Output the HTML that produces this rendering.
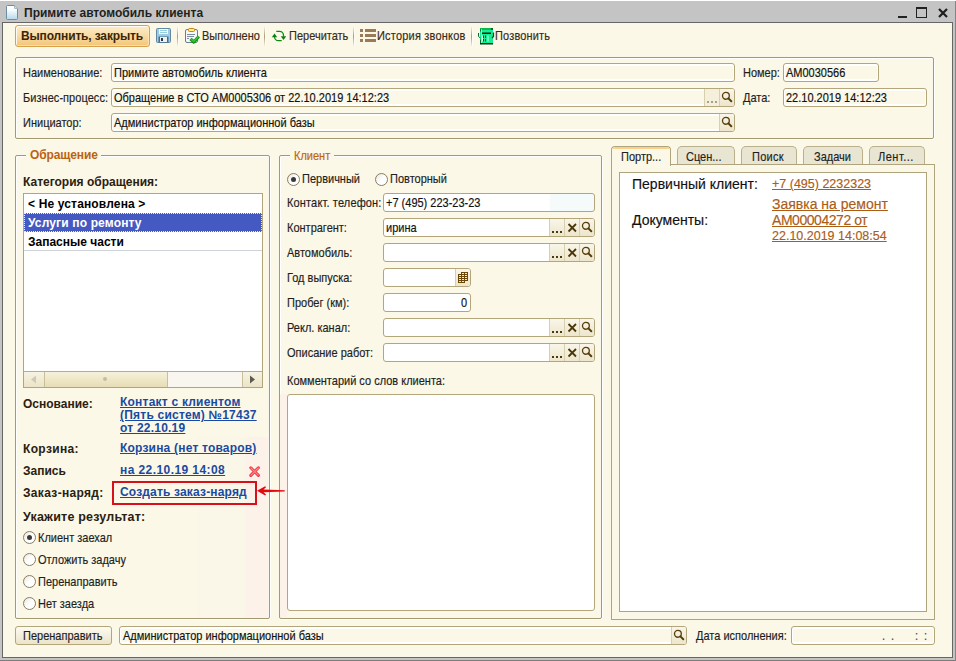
<!DOCTYPE html>
<html><head><meta charset="utf-8">
<style>
html,body{margin:0;padding:0}
body{width:956px;height:661px;position:relative;overflow:hidden;background:#fff;font-family:"Liberation Sans",sans-serif}
.a{position:absolute;box-sizing:border-box}
.t{position:absolute;white-space:nowrap;font-size:11px;line-height:13px;color:#1e1e1e;-webkit-text-stroke:0.15px currentColor}
.t.b,.t.lnk{-webkit-text-stroke:0}
.r{transform:scaleY(1.12);transform-origin:0 0}
.tb{color:#3a2a14}
.b{font-weight:bold}
.grp{position:absolute;box-sizing:border-box;border:1px solid #a49a70;border-radius:2px;box-shadow:inset 1px 1px 0 #fff,1px 1px 0 #fff}
.inp{position:absolute;box-sizing:border-box;background:#fff;border:1px solid #b3a67b;border-radius:3px;height:19px;overflow:hidden}
.ib{position:absolute;box-sizing:border-box;top:0;bottom:0;width:15px;background:linear-gradient(#f9f6e9,#ede6cc);border-left:1px solid #d8cfae}
.sep{position:absolute;width:1px;background:linear-gradient(rgba(168,156,120,0.1),#a89c78 50%,rgba(168,156,120,0.1));box-shadow:1px 0 0 rgba(255,255,255,0.6)}
.radio{position:absolute;box-sizing:border-box;width:13px;height:13px;border-radius:50%;border:1px solid #877d64;background:linear-gradient(135deg,#e9e5da,#fff 50%)}
.radio.on::after{content:"";position:absolute;left:3px;top:3px;width:5px;height:5px;border-radius:50%;background:#3a3a3a}
.lnk{color:#1a4aa0;text-decoration:underline;font-weight:bold;font-size:12px}
.olnk{color:#ab5c16;text-decoration:underline;font-size:14px}
.tab{position:absolute;box-sizing:border-box;top:146px;height:19px;border:1px solid #bab18c;border-bottom:none;border-radius:5px 5px 0 0;background:#e9e5d3}
</style></head><body>
<!-- window frame -->
<div class="a" style="left:0;top:1px;width:956px;height:660px;background:#c4c4c4"></div>
<div class="a" style="left:955px;top:1px;width:1px;height:660px;background:#858585"></div>
<div class="a" style="left:0;top:660px;width:956px;height:1px;background:#7c7c7c"></div>
<div class="a" style="left:2px;top:22px;width:951px;height:636px;border:1px solid #666;background:#fbf8e7"></div>
<!-- title icon -->
<svg class="a" style="left:6px;top:5px" width="13" height="15"><defs><linearGradient id="dg" x1="0" y1="0" x2="0" y2="1"><stop offset="0.25" stop-color="#fff"/><stop offset="1" stop-color="#b5d8ea"/></linearGradient></defs><path d="M0.5 1.5Q0.5 0.5 1.5 0.5H8.5L11.5 3.5V13.5Q11.5 14.5 10.5 14.5H1.5Q0.5 14.5 0.5 13.5z" fill="url(#dg)" stroke="#6a8ea3"/><path d="M8.5 0.5V3.5H11.5" fill="#d7e6ee" stroke="#9fbccc"/></svg>
<div class="t b" style="left:24px;top:7px;font-size:12px;color:#1f1f1f">Примите автомобиль клиента</div>
<!-- window controls -->
<div class="a" style="left:898px;top:16px;width:9px;height:2px;background:#222"></div>
<div class="a" style="left:916px;top:7px;width:11px;height:11px;border:1px solid #222;border-top-width:2px"></div>
<svg class="a" style="left:938px;top:8px" width="10" height="10"><path d="M1 1L9 9M9 1L1 9" stroke="#1e1e1e" stroke-width="2.2"/></svg>

<!-- toolbar -->
<div class="a" style="left:15px;top:25px;width:135px;height:22px;border:1px solid #d9a04a;border-radius:3px;background:linear-gradient(#fdeccb,#f9dca6 45%,#f3c578);box-shadow:inset 1px 1px 0 rgba(255,255,255,0.85),inset -1px -1px 0 rgba(255,240,200,0.6)"></div>
<div class="t b" style="left:21px;top:30px;font-size:12px;color:#3b2506;letter-spacing:-0.15px">Выполнить, закрыть</div>
<!-- save icon -->
<svg class="a" style="left:156px;top:28px" width="15" height="15"><rect x="0.5" y="0.5" width="14" height="14" rx="1" fill="#9ecbe8" stroke="#5f88a3"/><rect x="3" y="1" width="9" height="5" fill="#fbfeff"/><path d="M4 2.5h7M4 4.5h7" stroke="#93cfdc" stroke-width="1"/><rect x="2.5" y="8.5" width="10" height="6" fill="#4f6d82"/><rect x="4" y="9" width="7" height="5" fill="#eef1f2"/><rect x="5" y="10" width="2" height="3" fill="#1e3a4e"/></svg>
<div class="sep" style="left:177px;top:27px;height:19px"></div>
<!-- clipboard icon -->
<svg class="a" style="left:185px;top:28px" width="16" height="16"><rect x="0.5" y="1.5" width="12" height="13" rx="1.5" fill="#f4f8fb" stroke="#6a7e8a"/><rect x="3.5" y="0.5" width="6" height="3" rx="1" fill="#fff27a" stroke="#c8801a"/><path d="M2 6.5h8M2 8.5h7M2 10.5h2" stroke="#7d8d99" stroke-width="1"/><path d="M5.5 10.8L8.8 14L13.8 8.5" stroke="#0f8f12" stroke-width="3.2" fill="none" stroke-linejoin="round"/><path d="M5.8 10.9L8.8 13.6L13.5 8.6" stroke="#38c93a" stroke-width="1.4" fill="none"/></svg>
<div class="t tb r" style="left:202px;top:29px">Выполнено</div>
<div class="sep" style="left:264px;top:27px;height:19px"></div>
<!-- refresh icon -->
<svg class="a" style="left:271px;top:29px" width="16" height="14"><path d="M5.3 2.3H8.5A4 4 0 0 1 12.5 6.3V7.5" stroke="#0b8a0e" stroke-width="1.25" fill="none"/><path d="M9.8 7.3H15.2L12.5 11z" fill="#0b7d0e"/><path d="M10.7 11.7H7.5A4 4 0 0 1 3.5 7.7V7" stroke="#0b8a0e" stroke-width="1.25" fill="none"/><path d="M0.8 8.2H6.2L3.5 4.4z" fill="#0b7d0e"/></svg>
<div class="t tb r" style="left:289px;top:29px">Перечитать</div>
<div class="sep" style="left:353px;top:27px;height:19px"></div>
<!-- list icon -->
<svg class="a" style="left:360px;top:29px" width="17" height="13"><g fill="#9a7b58"><rect x="0" y="0" width="3" height="3"/><rect x="0" y="5" width="3" height="3"/><rect x="0" y="10" width="3" height="3"/><rect x="5" y="0" width="11" height="3"/><rect x="5" y="5" width="11" height="3"/><rect x="5" y="10" width="11" height="3"/></g></svg>
<div class="t tb r" style="left:377px;top:29px;letter-spacing:0.2px">История звонков</div>
<div class="sep" style="left:471px;top:27px;height:19px"></div>
<!-- phone icon -->
<svg class="a" style="left:478px;top:28px" width="17" height="17"><rect x="2" y="0" width="13" height="16" fill="#14ee92"/><rect x="2" y="0" width="11" height="2" fill="#0bb84c"/><rect x="13" y="0" width="2" height="2" fill="#0f5a3a"/><path d="M2.5 1.5V3.5M0.5 5v3.5l2 1.5M2.5 11.5v4" stroke="#0b6a2a" stroke-width="1" fill="none"/><path d="M15.5 4.5v4l-1.5 1.5" stroke="#0b3a22" stroke-width="1.2" fill="none"/><rect x="4" y="4.5" width="9" height="1.5" fill="#0a2a18"/><path d="M5.5 7.5v2.5M7.5 7.5v2.5M5.5 11v2.5M7.5 11v2.5" stroke="#0a5a28" stroke-width="1"/><path d="M4.5 7.5v6M10 7.5v6" stroke="#c8ffe6" stroke-width="1"/><rect x="2" y="15" width="13" height="1.5" fill="#0a3320"/><rect x="3" y="1" width="1" height="14" fill="#ffffff" opacity="0.5"/></svg>
<div class="t tb r" style="left:495px;top:29px;letter-spacing:0.15px">Позвонить</div>

<!-- header group -->
<div class="grp" style="left:15px;top:57px;width:919px;height:82px"></div>
<div class="t r" style="left:23px;top:66px">Наименование:</div>
<div class="t r" style="left:23px;top:91px;letter-spacing:0.05px">Бизнес-процесс:</div>
<div class="t r" style="left:23px;top:116px">Инициатор:</div>
<div class="inp" style="left:111px;top:63px;width:624px;background:#fbf8e7;box-shadow:inset 0 2px 0 #fff,inset 0 -2px 0 #fff,inset 1px 0 0 #fff,inset -1px 0 0 #fff"></div>
<div class="t r" style="left:114px;top:66px;color:#111">Примите автомобиль клиента</div>
<div class="inp" style="left:111px;top:88px;width:624px;background:#fbf8e7;box-shadow:inset 0 2px 0 #fff,inset 0 -2px 0 #fff,inset 1px 0 0 #fff,inset -1px 0 0 #fff"><div class="ib" style="right:15px;background:#f5f0dc"><svg style="position:absolute;left:-1px;top:0" width="15" height="17"><g fill="#a6a290"><rect x="3" y="12" width="2" height="2"/><rect x="7" y="12" width="2" height="2"/><rect x="11" y="12" width="2" height="2"/></g></svg></div><div class="ib" style="right:0"><svg style="position:absolute;left:-1px;top:0" width="15" height="17"><circle cx="6.9" cy="6.8" r="3.4" stroke="#5a400c" stroke-width="1.35" fill="none"/><path d="M9.4 9.4L12.3 12.3" stroke="#553c0a" stroke-width="2" stroke-linecap="round"/></svg></div></div>
<div class="t r" style="left:114px;top:91px;color:#111">Обращение в СТО АМ0005306 от 22.10.2019 14:12:23</div>
<div class="inp" style="left:111px;top:113px;width:624px;background:#fbf8e7;box-shadow:inset 0 2px 0 #fff,inset 0 -2px 0 #fff,inset 1px 0 0 #fff,inset -1px 0 0 #fff"><div class="ib" style="right:0"><svg style="position:absolute;left:-1px;top:0" width="15" height="17"><circle cx="6.9" cy="6.8" r="3.4" stroke="#5a400c" stroke-width="1.35" fill="none"/><path d="M9.4 9.4L12.3 12.3" stroke="#553c0a" stroke-width="2" stroke-linecap="round"/></svg></div></div>
<div class="t r" style="left:114px;top:116px;color:#111">Администратор информационной базы</div>
<div class="t r" style="left:743px;top:66px">Номер:</div>
<div class="inp" style="left:783px;top:63px;width:96px;background:#fbf8e7;box-shadow:inset 0 2px 0 #fff,inset 0 -2px 0 #fff,inset 1px 0 0 #fff,inset -1px 0 0 #fff"></div>
<div class="t r" style="left:786px;top:66px;color:#111">АМ0030566</div>
<div class="t r" style="left:743px;top:91px">Дата:</div>
<div class="inp" style="left:783px;top:88px;width:144px;background:#fbf8e7;box-shadow:inset 0 2px 0 #fff,inset 0 -2px 0 #fff,inset 1px 0 0 #fff,inset -1px 0 0 #fff"></div>
<div class="t r" style="left:786px;top:91px;color:#111">22.10.2019 14:12:23</div>


<!-- LEFT GROUP -->
<div class="grp" style="left:15px;top:155px;width:255px;height:464px"></div>
<div class="a" style="left:197px;top:437px;width:48px;height:181px;background:#fbf7e8"></div>
<div class="a" style="left:245px;top:437px;width:23px;height:181px;background:#fdf2ea"></div>
<div class="a" style="left:26px;top:150px;width:75px;height:10px;background:#fbf8e7"></div>
<div class="t b" style="left:30px;top:149px;font-size:12px;color:#bc620e;letter-spacing:-0.12px">Обращение</div>
<div class="t b" style="left:23px;top:176px;font-size:12px;color:#2a2010">Категория обращения:</div>
<div class="a" style="left:23px;top:193px;width:240px;height:195px;border:1px solid #b1a57c;background:#fff"></div>
<div class="a" style="left:24px;top:250px;width:238px;height:1px;background:#cdd3d9"></div>
<div class="a" style="left:24px;top:213px;width:238px;height:19px;background:#4459c1;border:1px dotted #e8ecff"></div>
<div class="t b" style="left:28px;top:198px;font-size:12px;color:#000;letter-spacing:0.15px">&lt; Не установлена &gt;</div>
<div class="t b" style="left:28px;top:217px;font-size:12px;color:#fff;letter-spacing:0.15px">Услуги по ремонту</div>
<div class="t b" style="left:28px;top:236px;font-size:12px;color:#000">Запасные части</div>
<!-- scrollbar -->
<div class="a" style="left:24px;top:371px;width:238px;height:16px;border-top:1px solid #b9ad86;background:#f8f6ee"></div>
<div class="a" style="left:24px;top:372px;width:21px;height:15px;background:linear-gradient(#f7f3e2,#ebe4c8);border-right:1px solid #c9bf9a"></div>
<div class="a" style="left:45px;top:372px;width:123px;height:15px;background:linear-gradient(#f6f1dc,#e6ddb5);border-right:1px solid #c9bf9a"></div>
<div class="a" style="left:242px;top:372px;width:20px;height:15px;background:linear-gradient(#f7f3e2,#ebe4c8);border-left:1px solid #c9bf9a"></div>
<svg class="a" style="left:30px;top:375px" width="8" height="9"><path d="M6 0.5v8L1 4.5z" fill="#cfcab8"/></svg>
<svg class="a" style="left:249px;top:375px" width="8" height="9"><path d="M1 0.5v8l5-4z" fill="#5f5a50"/></svg>
<div class="a" style="left:103px;top:377px;width:4px;height:4px;border-radius:50%;background:#c5bda0"></div>
<!-- links -->
<div class="t b" style="left:23px;top:398px;font-size:12px;color:#2a2010">Основание:</div>
<div class="t lnk" style="left:120px;top:396px;line-height:13px;letter-spacing:0.22px">Контакт с клиентом<br>(Пять систем) №17437<br>от 22.10.19</div>
<div class="t b" style="left:23px;top:443px;font-size:12px;color:#2a2010;letter-spacing:0.35px">Корзина:</div>
<div class="t lnk" style="left:120px;top:442px;letter-spacing:0.2px">Корзина (нет товаров)</div>
<div class="t b" style="left:23px;top:465px;font-size:12px;color:#2a2010">Запись</div>
<div class="t lnk" style="left:120px;top:464px;letter-spacing:0.42px">на 22.10.19 14:08</div>
<svg class="a" style="left:249px;top:466px" width="12" height="12"><path d="M1.8 1.8l7.6 7.6M9.4 1.8l-7.6 7.6" stroke="#ea3a45" stroke-width="3" stroke-linecap="round"/><path d="M2 2l7.2 7.2M9.2 2L2 9.2" stroke="#ff8a8a" stroke-width="1.1" stroke-linecap="round"/></svg>
<div class="t b" style="left:23px;top:487px;font-size:12px;color:#2a2010;letter-spacing:0.33px">Заказ-наряд:</div>
<div class="a" style="left:112px;top:481px;width:145px;height:24px;border:2px solid #d8101a"></div>
<div class="t lnk" style="left:120px;top:486px;letter-spacing:0.17px">Создать заказ-наряд</div>
<div class="t b" style="left:23px;top:511px;font-size:12.5px;color:#2a2010;letter-spacing:0.2px">Укажите результат:</div>
<div class="radio on" style="left:23px;top:531px"></div>
<div class="t r" style="left:38px;top:531px">Клиент заехал</div>
<div class="radio" style="left:23px;top:553px"></div>
<div class="t r" style="left:38px;top:553px">Отложить задачу</div>
<div class="radio" style="left:23px;top:575px"></div>
<div class="t r" style="left:38px;top:575px">Перенаправить</div>
<div class="radio" style="left:23px;top:597px"></div>
<div class="t r" style="left:38px;top:597px">Нет заезда</div>

<!-- MIDDLE GROUP -->
<div class="grp" style="left:279px;top:155px;width:323px;height:464px"></div>
<div class="a" style="left:290px;top:150px;width:44px;height:10px;background:#fbf8e7"></div>
<div class="t r" style="left:294px;top:149px;color:#c0650c">Клиент</div>
<div class="radio on" style="left:287px;top:173px"></div>
<div class="t r" style="left:302px;top:172px">Первичный</div>
<div class="radio" style="left:375px;top:173px"></div>
<div class="t r" style="left:390px;top:172px">Повторный</div>
<div class="t r" style="left:287px;top:196px;letter-spacing:0.15px">Контакт. телефон:</div>
<div class="inp" style="left:383px;top:193px;width:212px;background:linear-gradient(90deg,#fff 165px,#f5fafa 167px)"></div>
<div class="t r" style="left:386px;top:196px;color:#111">+7 (495) 223-23-23</div>
<div class="t r" style="left:287px;top:221px">Контрагент:</div>
<div class="inp" style="left:383px;top:218px;width:212px"><div class="ib" style="right:30px"><svg style="position:absolute;left:-1px;top:0" width="15" height="17"><g fill="#4a3a14"><rect x="3" y="12" width="2" height="2"/><rect x="7" y="12" width="2" height="2"/><rect x="11" y="12" width="2" height="2"/></g></svg></div><div class="ib" style="right:15px"><svg style="position:absolute;left:-1px;top:0" width="15" height="17"><path d="M4.5 5L12 12.5M12 5L4.5 12.5" stroke="#4b3709" stroke-width="1.8"/></svg></div><div class="ib" style="right:0"><svg style="position:absolute;left:-1px;top:0" width="15" height="17"><circle cx="6.9" cy="6.8" r="3.4" stroke="#5a400c" stroke-width="1.35" fill="none"/><path d="M9.4 9.4L12.3 12.3" stroke="#553c0a" stroke-width="2" stroke-linecap="round"/></svg></div></div>
<div class="t r" style="left:386px;top:221px;color:#111">ирина</div>
<div class="t r" style="left:287px;top:246px">Автомобиль:</div>
<div class="inp" style="left:383px;top:243px;width:212px"><div class="ib" style="right:30px"><svg style="position:absolute;left:-1px;top:0" width="15" height="17"><g fill="#4a3a14"><rect x="3" y="12" width="2" height="2"/><rect x="7" y="12" width="2" height="2"/><rect x="11" y="12" width="2" height="2"/></g></svg></div><div class="ib" style="right:15px"><svg style="position:absolute;left:-1px;top:0" width="15" height="17"><path d="M4.5 5L12 12.5M12 5L4.5 12.5" stroke="#4b3709" stroke-width="1.8"/></svg></div><div class="ib" style="right:0"><svg style="position:absolute;left:-1px;top:0" width="15" height="17"><circle cx="6.9" cy="6.8" r="3.4" stroke="#5a400c" stroke-width="1.35" fill="none"/><path d="M9.4 9.4L12.3 12.3" stroke="#553c0a" stroke-width="2" stroke-linecap="round"/></svg></div></div>
<div class="t r" style="left:287px;top:271px">Год выпуска:</div>
<div class="inp" style="left:383px;top:268px;width:88px"><div class="ib" style="right:0"><svg style="position:absolute;left:-1px;top:0" width="15" height="17"><g fill="#6b4708"><rect x="6" y="3" width="7" height="1"/><rect x="3" y="5" width="10" height="1"/><rect x="3" y="7" width="10" height="1"/><rect x="3" y="9" width="10" height="1"/><rect x="3" y="11" width="10" height="1"/><rect x="3" y="13" width="7" height="1"/><rect x="3" y="5" width="1" height="9"/><rect x="6" y="3" width="1" height="11"/><rect x="9" y="3" width="1" height="11"/><rect x="12" y="3" width="1" height="9"/></g></svg></div></div>
<div class="t r" style="left:287px;top:296px">Пробег (км):</div>
<div class="inp" style="left:383px;top:293px;width:88px"></div>
<div class="t r" style="left:461px;top:296px;color:#111">0</div>
<div class="t r" style="left:287px;top:321px">Рекл. канал:</div>
<div class="inp" style="left:383px;top:318px;width:212px"><div class="ib" style="right:30px"><svg style="position:absolute;left:-1px;top:0" width="15" height="17"><g fill="#4a3a14"><rect x="3" y="12" width="2" height="2"/><rect x="7" y="12" width="2" height="2"/><rect x="11" y="12" width="2" height="2"/></g></svg></div><div class="ib" style="right:15px"><svg style="position:absolute;left:-1px;top:0" width="15" height="17"><path d="M4.5 5L12 12.5M12 5L4.5 12.5" stroke="#4b3709" stroke-width="1.8"/></svg></div><div class="ib" style="right:0"><svg style="position:absolute;left:-1px;top:0" width="15" height="17"><circle cx="6.9" cy="6.8" r="3.4" stroke="#5a400c" stroke-width="1.35" fill="none"/><path d="M9.4 9.4L12.3 12.3" stroke="#553c0a" stroke-width="2" stroke-linecap="round"/></svg></div></div>
<div class="t r" style="left:287px;top:346px">Описание работ:</div>
<div class="inp" style="left:383px;top:343px;width:212px"><div class="ib" style="right:30px"><svg style="position:absolute;left:-1px;top:0" width="15" height="17"><g fill="#4a3a14"><rect x="3" y="12" width="2" height="2"/><rect x="7" y="12" width="2" height="2"/><rect x="11" y="12" width="2" height="2"/></g></svg></div><div class="ib" style="right:15px"><svg style="position:absolute;left:-1px;top:0" width="15" height="17"><path d="M4.5 5L12 12.5M12 5L4.5 12.5" stroke="#4b3709" stroke-width="1.8"/></svg></div><div class="ib" style="right:0"><svg style="position:absolute;left:-1px;top:0" width="15" height="17"><circle cx="6.9" cy="6.8" r="3.4" stroke="#5a400c" stroke-width="1.35" fill="none"/><path d="M9.4 9.4L12.3 12.3" stroke="#553c0a" stroke-width="2" stroke-linecap="round"/></svg></div></div>
<div class="t r" style="left:287px;top:374px">Комментарий со слов клиента:</div>
<div class="a" style="left:280px;top:394px;width:7px;height:223px;background:#fcf2ea"></div>
<div class="a" style="left:287px;top:394px;width:308px;height:217px;border:1px solid #b3a67b;border-radius:3px;background:#fff"></div>

<!-- RIGHT PANEL -->
<div class="tab" style="left:677px;width:58px"></div>
<div class="tab" style="left:741px;width:56px"></div>
<div class="tab" style="left:803px;width:60px"></div>
<div class="tab" style="left:869px;width:56px"></div>
<div class="a" style="left:611px;top:164px;width:324px;height:456px;border:1px solid #aea57f;background:#fbf8e7"></div>
<div class="tab" style="left:611px;width:60px;height:20px;background:#fbf8e7;border-color:#aea57f;border-radius:4px 4px 0 0"><div style="position:absolute;left:1px;right:1px;top:0;height:2px;background:#fcd08a;border-radius:3px 3px 0 0"></div></div>
<div class="t r" style="left:621px;top:150px">Портр...</div>
<div class="t r" style="left:686px;top:150px">Сцен...</div>
<div class="t r" style="left:752px;top:150px;letter-spacing:0.3px">Поиск</div>
<div class="t r" style="left:814px;top:150px">Задачи</div>
<div class="t r" style="left:878px;top:150px;letter-spacing:0.5px">Лент...</div>
<div class="a" style="left:619px;top:172px;width:308px;height:440px;border:1px solid #aea57f;background:#fff"></div>
<div class="t" style="left:632px;top:176px;font-size:14px;line-height:16px;color:#111">Первичный клиент:</div>
<div class="t olnk" style="left:772px;top:176px;line-height:16px;font-size:12.5px">+7 (495) 2232323</div>
<div class="t" style="left:632px;top:212px;font-size:14px;line-height:16px;color:#111">Документы:</div>
<div class="t olnk" style="left:772px;top:197px;line-height:15.5px">Заявка на ремонт<br><span style="letter-spacing:-0.45px">АМ00004272 от</span><br><span style="font-size:12.5px">22.10.2019 14:08:54</span></div>

<!-- BOTTOM -->
<div class="a" style="left:15px;top:626px;width:97px;height:19px;border:1px solid #b3a67b;border-radius:3px;background:linear-gradient(#fdfbf2,#ebe4c9)"></div>
<div class="t r" style="left:23px;top:629px">Перенаправить</div>
<div class="inp" style="left:119px;top:626px;width:568px;background:#fbf8e7;box-shadow:inset 0 2px 0 #fff,inset 0 -2px 0 #fff,inset 1px 0 0 #fff,inset -1px 0 0 #fff"><div class="ib" style="right:0"><svg style="position:absolute;left:-1px;top:0" width="15" height="17"><circle cx="6.9" cy="6.8" r="3.4" stroke="#5a400c" stroke-width="1.35" fill="none"/><path d="M9.4 9.4L12.3 12.3" stroke="#553c0a" stroke-width="2" stroke-linecap="round"/></svg></div></div>
<div class="t r" style="left:123px;top:629px;color:#111">Администратор информационной базы</div>
<div class="t r" style="left:696px;top:629px">Дата исполнения:</div>
<div class="inp" style="left:791px;top:626px;width:144px;background:#fbf8e7;box-shadow:inset 0 2px 0 #fff,inset 0 -2px 0 #fff,inset 1px 0 0 #fff,inset -1px 0 0 #fff"></div>
<div class="t r" style="left:882px;top:629px;color:#444">.</div><div class="t r" style="left:891px;top:629px;color:#444">.</div><div class="t r" style="left:915px;top:629px;color:#444">:</div><div class="t r" style="left:924px;top:629px;color:#444">:</div>

<svg class="a" style="left:255px;top:484px" width="32" height="14"><path d="M2 6.8L10.2 2.3L11 3.3L8.5 5.5L29.5 6.2L29.9 6.8L29.5 7.4L8.5 8.2L11 10.4L10.2 11.4Z" fill="#e5070f"/></svg>
</body></html>
